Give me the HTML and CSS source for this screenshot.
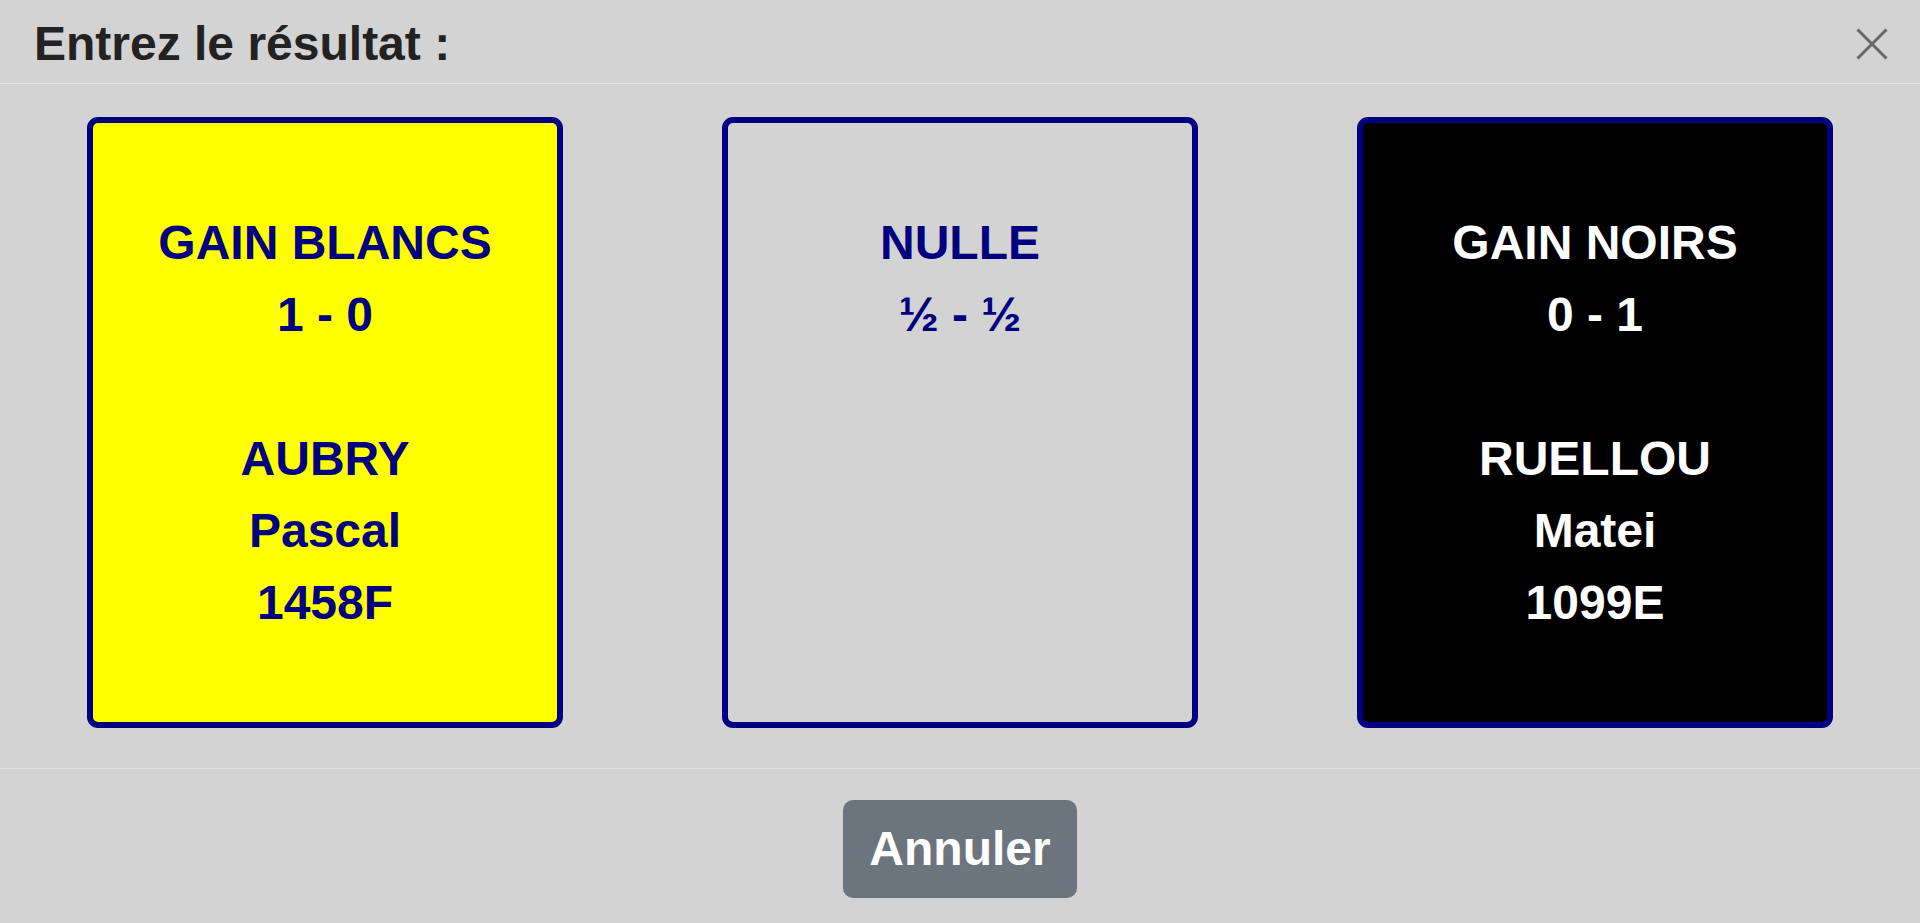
FILE: index.html
```html
<!DOCTYPE html>
<html lang="fr">
<head>
<meta charset="utf-8">
<title>Entrez le résultat</title>
<link rel="stylesheet" href="styles.css">
</head>
<body>
<div class="modal">
  <div class="modal-header">
    <h5 class="modal-title">Entrez le résultat :</h5>
    <button class="close" type="button" aria-label="Fermer">
      <svg width="32" height="32" viewBox="0 0 32 32"><path d="M1.5 1.5 L30.5 30.5 M30.5 1.5 L1.5 30.5" stroke="#676767" stroke-width="3" fill="none"/></svg>
    </button>
  </div>
  <div class="modal-body">
    <div class="card card-white">GAIN BLANCS<br>1 - 0<br><br>AUBRY<br>Pascal<br>1458F</div>
    <div class="card card-draw">NULLE<br>½ - ½</div>
    <div class="card card-black">GAIN NOIRS<br>0 - 1<br><br>RUELLOU<br>Matei<br>1099E</div>
  </div>
  <div class="modal-footer">
    <button class="btn" type="button">Annuler</button>
  </div>
</div>
</body>
</html>
```

FILE: styles.css
```css
html, body {
  margin: 0;
  padding: 0;
  background: #d3d3d3;
  font-family: "Liberation Sans", Arial, sans-serif;
}

.modal {
  width: 100%;
}

.modal-header {
  display: flex;
  justify-content: space-between;
  align-items: center;
  padding: 8px 32px 3px 34px;
  border-bottom: 1px solid #e3e3e3;
}

.modal-title {
  margin: 0;
  font-size: 48px;
  line-height: 72px;
  font-weight: bold;
  color: #222222;
}

.close {
  background: none;
  border: 0;
  padding: 0;
  width: 32px;
  height: 32px;
  display: flex;
  cursor: pointer;
}

.modal-body {
  display: flex;
  justify-content: space-between;
  padding: 33px 87px 40px;
}

.card {
  box-sizing: border-box;
  width: 476px;
  border: 6px solid #000080;
  border-radius: 11px;
  padding: 84px 0 83px;
  text-align: center;
  font-size: 48px;
  line-height: 72px;
  font-weight: bold;
  color: #000080;
}

.card-white {
  background: #ffff00;
}

.card-draw {
  background: transparent;
}

.card-black {
  background: #000000;
  color: #ffffff;
}

.modal-footer {
  display: flex;
  justify-content: center;
  border-top: 1px solid #dde3e9;
  padding-top: 31px;
}

.btn {
  font-family: "Liberation Sans", Arial, sans-serif;
  font-size: 48px;
  line-height: 72px;
  font-weight: bold;
  color: #ffffff;
  background: #6c757d;
  border: 0;
  border-radius: 10px;
  padding: 13px 26px;
  cursor: pointer;
}
```
